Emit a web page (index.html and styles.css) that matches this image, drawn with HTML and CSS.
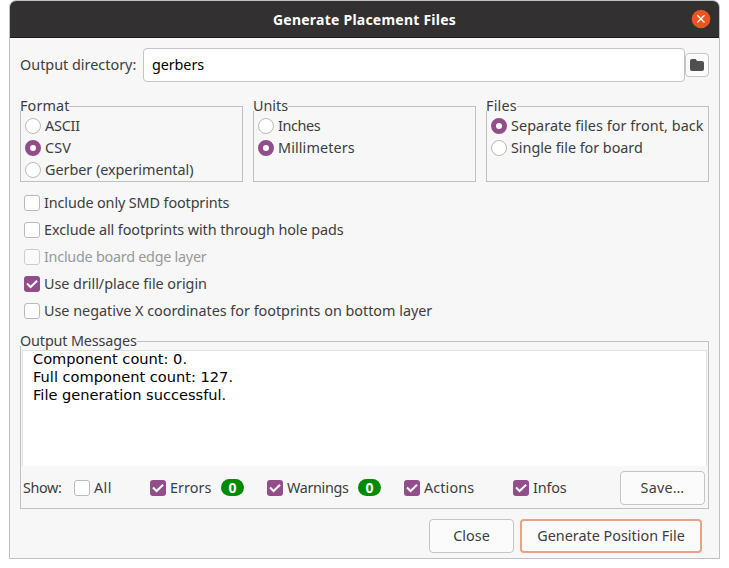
FILE: index.html
```html
<!DOCTYPE html>
<html lang="en">
<head>
<meta charset="utf-8">
<title>Generate Placement Files</title>
<link rel="stylesheet" href="styles.css">
</head>
<body>
<svg width="0" height="0" class="defs" aria-hidden="true">
  <symbol id="tick" viewBox="0 0 16 16"><path d="M3 7.5 6.6 11 13.1 4.8" fill="none" stroke="#fff" stroke-width="2"/></symbol>
</svg>
<main class="window">
  <header class="titlebar">
    <h1 class="title">Generate Placement Files</h1>
    <button class="close" aria-label="Close window"><svg width="20" height="20" viewBox="0 0 20 20"><circle cx="10" cy="10" r="9.3" fill="#e95420"/><path d="M6.3 6.3l7.2 7.2M13.5 6.3l-7.2 7.2" stroke="#fff" stroke-width="1.3"/></svg></button>
  </header>
  <div class="content">
    <div class="directory">
      <span class="dir-label">Output directory:</span>
      <div class="entry"><span class="ls-m10">gerbers</span></div>
      <button class="browse" aria-label="Browse"><svg width="16" height="14" viewBox="0 0 16 14"><path d="M1 3Q1 1 3 1H6Q7 1 7.5 2L8 3H13Q15 3 15 5V11Q15 13 13 13H3Q1 13 1 11Z" fill="#505050"/></svg></button>
    </div>

    <div class="groups">
      <fieldset class="group">
        <legend class="ls-p10">Format</legend>
        <label class="choice"><i class="radio"></i><span class="ls-m19">ASCII</span></label>
        <label class="choice"><i class="radio on"></i><span class="ls-p10">CSV</span></label>
        <label class="choice"><i class="radio"></i><span class="ls-m04">Gerber (experimental)</span></label>
      </fieldset>
      <fieldset class="group">
        <legend class="ls-m04">Units</legend>
        <label class="choice"><i class="radio"></i><span class="ls-m40">Inches</span></label>
        <label class="choice"><i class="radio on"></i><span class="ls-p10">Millimeters</span></label>
      </fieldset>
      <fieldset class="group">
        <legend class="ls-p19">Files</legend>
        <label class="choice"><i class="radio on"></i><span class="ls-p06">Separate files for front, back</span></label>
        <label class="choice"><i class="radio"></i><span class="ls-m04">Single file for board</span></label>
      </fieldset>
    </div>

    <div class="options">
      <label class="option"><i class="check"></i><span class="ls-m12">Include only SMD footprints</span></label>
      <label class="option"><i class="check"></i><span class="ls-m08">Exclude all footprints with through hole pads</span></label>
      <label class="option disabled"><i class="check"></i><span class="ls-m26">Include board edge layer</span></label>
      <label class="option"><i class="check on"><svg><use href="#tick"/></svg></i><span class="ls-m04">Use drill/place file origin</span></label>
      <label class="option"><i class="check"></i><span class="ls-m02">Use negative X coordinates for footprints on bottom layer</span></label>
    </div>

    <fieldset class="group messages">
      <legend class="ls-m15">Output Messages</legend>
      <div class="log">
        <p>Component count: 0.</p>
        <p>Full component count: 127.</p>
        <p>File generation successful.</p>
      </div>
      <div class="filters">
        <span class="show ls-m40">Show:</span>
        <label class="filter all"><i class="check"></i><span class="ls-p40">All</span></label>
        <label class="filter errors"><i class="check on"><svg><use href="#tick"/></svg></i><span class="ls-p06">Errors</span><b class="badge">0</b></label>
        <label class="filter warnings"><i class="check on"><svg><use href="#tick"/></svg></i><span class="ls-m36">Warnings</span><b class="badge">0</b></label>
        <label class="filter actions"><i class="check on"><svg><use href="#tick"/></svg></i><span class="ls-p10">Actions</span></label>
        <label class="filter"><i class="check on"><svg><use href="#tick"/></svg></i><span class="ls-m19">Infos</span></label>
        <button class="button save">Save…</button>
      </div>
    </fieldset>

    <footer class="actions-bar">
      <button class="button cancel">Close</button>
      <button class="button primary">Generate Position File</button>
    </footer>
  </div>
</main>
</body>
</html>
```
FILE: styles.css
```css
* { box-sizing: border-box; }

body {
  margin: 0;
  padding: 0 9px;
  background: #fff;
  color: #3d3d3d;
  font: 14.4px/18px "Noto Sans", sans-serif;
  white-space: nowrap;
}

button { font: inherit; color: inherit; padding: 0; }
.defs { display: none; }

.window {
  width: 711px;
  height: 559px;
  background: #f7f7f7;
  border: 1px solid #c0c0c0;
  border-radius: 7px 7px 0 0;
  overflow: hidden;
}

.titlebar {
  display: grid;
  grid-template-columns: 1fr auto 1fr;
  align-items: center;
  height: 37px;
  padding-right: 8px;
  background: #323030;
  border-bottom: 1px solid #1c1b1b;
}
.title {
  grid-column: 2;
  margin: 2px 0 0 8px;
  color: #fff;
  font-size: 14px;
  line-height: 18px;
  letter-spacing: 0.23px;
}
.close {
  justify-self: end;
  width: 20px;
  height: 20px;
  border: 0;
  background: none;
}
.close svg, .browse svg, .check svg { display: block; }

.content { padding: 10px 10px 0; }

.directory { display: flex; align-items: center; height: 34px; }
.dir-label { width: 123px; }
.entry {
  display: flex;
  align-items: center;
  width: 542px;
  height: 34px;
  padding-left: 8px;
  color: #000;
  background: #fff;
  border: 1px solid #c4c4c4;
  border-radius: 4px;
}
.browse {
  display: grid;
  place-items: center;
  width: 24px;
  height: 24px;
  background: #fbfbfb;
  border: 1px solid #c4c4c4;
  border-radius: 4px;
}

.groups {
  display: grid;
  grid-template-columns: 223px 223px 223px;
  gap: 10px;
  margin-top: 19px;
}
.group {
  min-width: 0;
  height: 81px;
  margin: 0;
  padding: 4px 0 0 4px;
  border: 1px solid #c0c0c0;
}
.group legend {
  height: 10px;
  margin-left: -5px;
  padding: 0;
  line-height: 10px;
}
.choice { display: flex; align-items: center; gap: 4px; height: 22px; }

.radio, .check {
  flex: none;
  width: 16px;
  height: 16px;
  background: #fff;
  border: 1px solid #bababa;
}
.radio { border-radius: 50%; }
.radio.on { border: 5px solid #924d8b; }
.check { border-radius: 3px; }
.check.on { background: #924d8b; border: 0; }
.check svg { width: 16px; height: 16px; }

.options { margin-top: 7px; padding-left: 4px; }
.option { display: flex; align-items: center; gap: 4px; height: 27px; }
.disabled { color: #999; }
.disabled .check { background: #fafafa; border-color: #ccc; }

.messages { height: 173px; margin-top: 12px; padding: 4px 0 0; }
.group.messages legend { margin-left: -1px; }
.log {
  height: 116px;
  margin: 0 1px;
  padding-left: 10px;
  background: #fff;
  border: solid #e2e2e2;
  border-width: 1px 1px 0;
  color: #000;
  font: 14.6px/18px "DejaVu Sans", sans-serif;
}
.log p { margin: 0; }
.log p:first-child { margin-top: -1px; }
.filters { display: flex; align-items: center; height: 42px; padding: 2px 3px 0 2px; }
.show { width: 51px; }
.filter { display: flex; align-items: center; gap: 4px; }
.all { width: 76px; }
.errors { width: 117px; }
.warnings { width: 137px; }
.actions { width: 109px; }
.badge {
  width: 23px;
  height: 17px;
  margin: 0 23px 1px auto;
  border-radius: 9px;
  background: #008a00;
  color: #fff;
  font-size: 14px;
  line-height: 17px;
  text-align: center;
}

.button {
  height: 34px;
  background: #fbfbfb;
  border: 1px solid #c4c4c4;
  border-radius: 4px;
}
.save { width: 85px; margin-left: auto; letter-spacing: 0.2px; }
.actions-bar {
  display: flex;
  justify-content: flex-end;
  gap: 6px;
  margin-top: 10px;
  padding-right: 7px;
}
.cancel { width: 85px; }
.primary { width: 182px; border: 2px solid #eba184; }

.ls-m40 { letter-spacing: -0.4px; }
.ls-m36 { letter-spacing: -0.36px; }
.ls-m26 { letter-spacing: -0.26px; }
.ls-m19 { letter-spacing: -0.19px; }
.ls-m15 { letter-spacing: -0.15px; }
.ls-m12 { letter-spacing: -0.12px; }
.ls-m10 { letter-spacing: -0.1px; }
.ls-m08 { letter-spacing: -0.08px; }
.ls-m04 { letter-spacing: -0.04px; }
.ls-m02 { letter-spacing: -0.02px; }
.ls-p06 { letter-spacing: 0.06px; }
.ls-p10 { letter-spacing: 0.1px; }
.ls-p19 { letter-spacing: 0.19px; }
.ls-p40 { letter-spacing: 0.4px; }
```
